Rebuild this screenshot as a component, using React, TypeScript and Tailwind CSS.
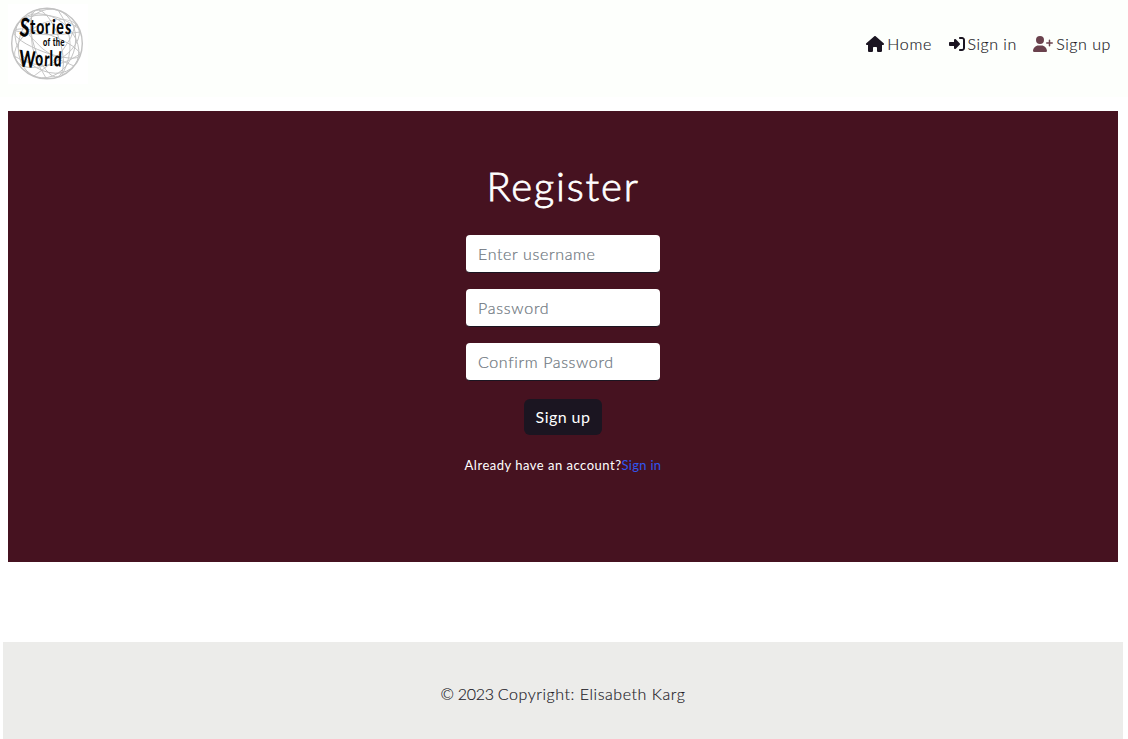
import type { ReactNode } from "react";
import { FaHouse, FaRightToBracket, FaUserPlus } from "react-icons/fa6";

function Logo() {
  return (
    <svg viewBox="0 0 80 80" className="h-20 w-20" aria-label="Stories of the World">
      <rect width="80" height="80" fill="#fff" />
      <g fill="none" stroke="#c2c2c2" strokeWidth="0.9">
        <circle cx="39" cy="39.5" r="35.3" strokeWidth="1.4" />
        <ellipse cx="39" cy="39.5" rx="35" ry="20" transform="rotate(-28 39 39.5)" />
        <ellipse cx="39" cy="39.5" rx="35" ry="26" transform="rotate(38 39 39.5)" />
        <ellipse cx="39" cy="39.5" rx="35" ry="13" transform="rotate(72 39 39.5)" />
        <ellipse cx="39" cy="39.5" rx="35" ry="28" transform="rotate(-72 39 39.5)" />
        <ellipse cx="39" cy="39.5" rx="35" ry="9" transform="rotate(20 39 39.5)" />
        <path d="M14 15Q42 4 70 24M6 52Q40 72 72 50M24 8Q18 46 38 74M50 6Q72 38 54 71M8 27Q40 34 72 28M12 17Q30 50 66 62M68 20Q60 50 26 72" />
      </g>
      <g fill="#050505" fontFamily="Lato, sans-serif" fontWeight="900">
        <text transform="translate(11 31.5) scale(0.78 1.12)" fontSize="18" letterSpacing="1.3">
          <tspan fontSize="23" rotate="8">S</tspan>
          <tspan dy="-1.5" rotate="0 0 -5 4 0 5">tories</tspan>
        </text>
        <text transform="translate(35 42) scale(0.78 1.1)" fontSize="9.5" letterSpacing="0.5">of the</text>
        <text transform="translate(11 62.5) scale(0.76 1.15)" fontSize="18" letterSpacing="0.6">
          <tspan fontSize="20" rotate="4">W</tspan>
          <tspan dy="-0.5" rotate="-4 4 0 4">orld</tspan>
        </text>
      </g>
    </svg>
  );
}

function NavItem({ icon, label, spacing }: { icon: ReactNode; label: string; spacing: string }) {
  return (
    <a href="#" className="flex items-center gap-[3px] text-base font-light text-[#211a26] [-webkit-text-stroke:0.15px]">
      {icon}
      <span className={spacing}>{label}</span>
    </a>
  );
}

function Field({ type, label, spacing }: { type: string; label: string; spacing: string }) {
  return (
    <input
      type={type}
      placeholder={label}
      className={`h-[38px] w-[194px] rounded border-b border-[#1b1521] bg-white px-3 pb-px text-base font-light [-webkit-text-stroke:0.2px] placeholder:text-[#6c757d] ${spacing}`}
    />
  );
}

export default function App() {
  return (
    <div className="flex h-[739px] flex-col overflow-hidden bg-white font-[Lato,sans-serif]">
      <header className="flex h-[97px] shrink-0 items-start justify-between bg-[#fdfffc] pr-[17px] pl-2">
        <div className="pt-1">
          <Logo />
        </div>
        <nav className="flex h-[88px] items-center gap-[16.5px]">
          <NavItem label="Home" spacing="tracking-[0.7px]" icon={<FaHouse className="h-4 w-[18px] text-[#1b1521]" />} />
          <NavItem label="Sign in" spacing="tracking-[0.5px]" icon={<FaRightToBracket className="h-4 w-4 text-[#1b1521]" />} />
          <NavItem label="Sign up" spacing="tracking-[0.55px]" icon={<FaUserPlus className="h-4 w-5 text-[#6a424d]" />} />
        </nav>
      </header>
      <main className="mt-3.5 mr-2.5 ml-2 flex h-[451px] shrink-0 flex-col items-center bg-[#461220]">
        <h1 className="mt-[51px] h-[49px] text-[40px] leading-[48px] font-light tracking-[1.8px] text-white [-webkit-text-stroke:0.8px]">Register</h1>
        <form className="mt-6 flex flex-col items-center">
          <div className="flex flex-col gap-4">
            <Field type="text" label="Enter username" spacing="tracking-[0.65px]" />
            <Field type="password" label="Password" spacing="tracking-[0.75px]" />
            <Field type="password" label="Confirm Password" spacing="tracking-[0.63px]" />
          </div>
          <button type="button" className="mt-[18px] h-9 w-[78px] rounded-md bg-[#1b1521] text-base tracking-[0.45px] text-white">Sign up</button>
        </form>
        <p className="mt-5 text-[13px] leading-5 whitespace-nowrap text-white">
          <span className="tracking-[0.5px]">Already have an account?</span>
          <a href="#" className="tracking-[0.3px] text-[#3056f0]">Sign in</a>
        </p>
      </main>
      <footer className="mt-20 mr-[5px] ml-[3px] flex h-[97px] shrink-0 items-center justify-center bg-[#ececea] pt-1.5 text-base font-light text-[#211a26] [-webkit-text-stroke:0.15px]">
        <p className="tracking-[0.55px]"><span className="tracking-[-0.3px]">© 2023 </span>Copyright: Elisabeth Karg</p>
      </footer>
    </div>
  );
}
